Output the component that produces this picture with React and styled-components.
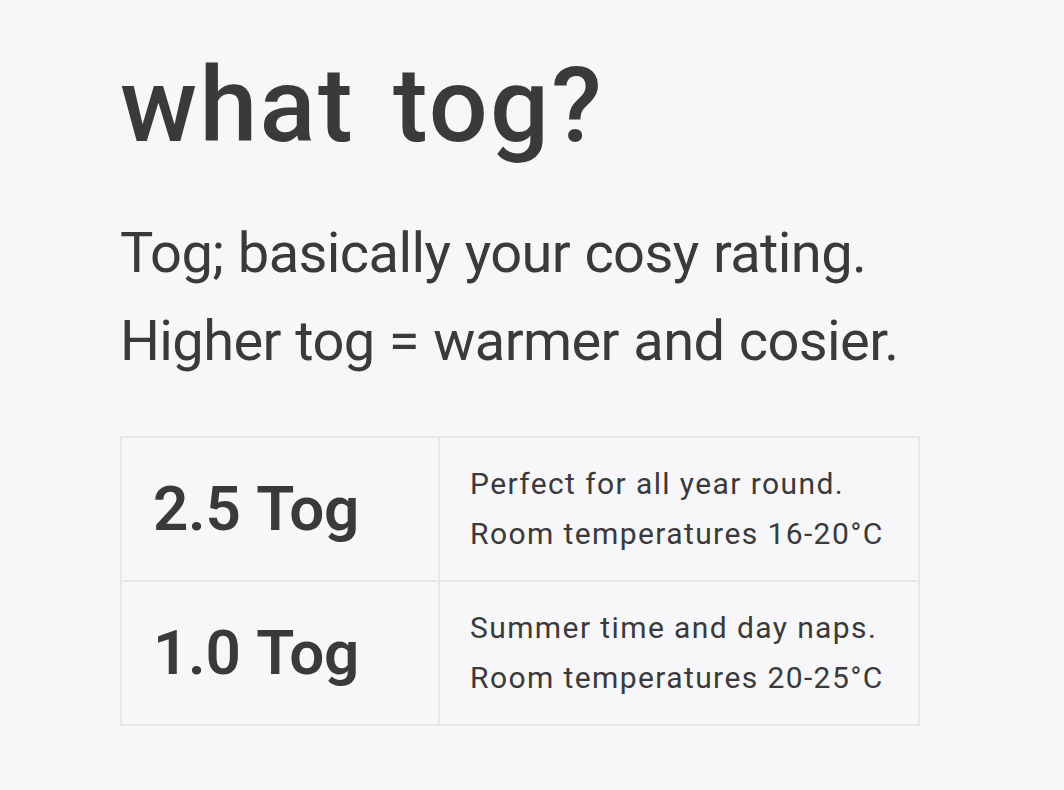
import React from "react";
import styled, { createGlobalStyle } from "styled-components";

const GlobalStyle = createGlobalStyle`
  body {
    margin: 0;
    background: #f7f7f9;
    color: #3a3a3a;
    font-family: Roboto, "Liberation Sans", sans-serif;
  }
`;

const Page = styled.div`
  padding: 44px 0 0 120px;
`;

const Title = styled.h1`
  margin: 0;
  font-size: 104px;
  line-height: 1.2;
  font-weight: 500;
  letter-spacing: 2.3px;
  word-spacing: 10px;
`;

const Intro = styled.p`
  margin: 40px 0 0;
  font-size: 56px;
  line-height: 88px;
  font-weight: 400;
  letter-spacing: -0.6px;
  word-spacing: 1px;
`;

const TogTable = styled.table`
  margin-top: 51px;
  width: 800px;
  table-layout: fixed;
  border-collapse: collapse;
  border: 2px solid #e8e8e3;
`;

const Cell = styled.td`
  border: 2px solid #e8e8e3;
  height: 142px;
  width: ${(p) => (p.$width ? `${p.$width}px` : "auto")};
  padding: 0 0 0 ${(p) => p.$pad}px;
  vertical-align: middle;
`;

const Label = styled.span`
  font-size: 62px;
  font-weight: 600;
  word-spacing: 2px;
  letter-spacing: -0.3px;
`;

const Desc = styled.div`
  font-size: 30px;
  line-height: 50px;
  letter-spacing: 1.4px;
`;

const rows = [
  { tog: "2.5 Tog", lines: ["Perfect for all year round.", "Room temperatures 16-20°C"] },
  { tog: "1.0 Tog", lines: ["Summer time and day naps.", "Room temperatures 20-25°C"] },
];

const App = () => {
  return (
    <Page>
      <GlobalStyle />
      <Title>what tog?</Title>
      <Intro>
        Tog; basically your cosy rating.
        <br />
        Higher tog = warmer and cosier.
      </Intro>
      <TogTable>
        <tbody>
          {rows.map((r) => (
            <tr key={r.tog}>
              <Cell $pad={31} $width={285}>
                <Label>{r.tog}</Label>
              </Cell>
              <Cell $pad={30}>
                {r.lines.map((l) => (
                  <Desc key={l}>{l}</Desc>
                ))}
              </Cell>
            </tr>
          ))}
        </tbody>
      </TogTable>
    </Page>
  );
};

export default App;
